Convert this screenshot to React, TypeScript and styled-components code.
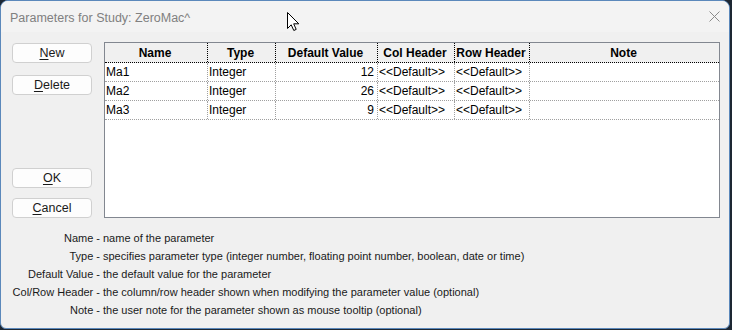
import React from 'react';
import styled, { createGlobalStyle } from 'styled-components';

const GlobalStyle = createGlobalStyle`
  html, body {
    margin: 0;
    padding: 0;
    background: #1d2733;
  }
  * {
    box-sizing: border-box;
  }
`;

const Window = styled.div`
  width: 730px;
  height: 329px;
  background: #f0f0f0;
  border: 1px solid #5b88bb;
  border-radius: 8px 8px 6px 6px;
  overflow: hidden;
  display: flex;
  flex-direction: column;
  font-family: 'Liberation Sans', Arial, sans-serif;
  font-size: 12px;
  color: #1a1a1a;
  position: relative;
`;

const TitleBar = styled.div`
  height: 31px;
  display: flex;
  align-items: center;
  justify-content: space-between;
  padding: 0 9px 0 9px;
  background: #f3f3f3;
`;

const Title = styled.div`
  color: #808080;
  font-size: 12.5px;
  padding-top: 2px;
`;

const CloseButton = styled.div`
  width: 30px;
  height: 20px;
  display: flex;
  align-items: center;
  justify-content: flex-end;
`;

const Body = styled.div`
  flex: 1;
  display: flex;
  flex-direction: column;
  padding: 10px 9px 0 11px;
`;

const Main = styled.div`
  display: flex;
  gap: 12px;
`;

const ButtonColumn = styled.div`
  width: 80px;
  display: flex;
  flex-direction: column;
  padding-top: 1px;
`;

const ButtonGroup = styled.div<{ $gap: number }>`
  display: flex;
  flex-direction: column;
  gap: ${p => p.$gap}px;
`;

const Spacer = styled.div`
  flex: 1;
`;

const Button = styled.button`
  width: 80px;
  height: 20px;
  padding: 0;
  border: 1px solid #d0d0d0;
  border-radius: 4px;
  background: #fdfdfd;
  font-family: 'Liberation Sans', Arial, sans-serif;
  font-size: 12.5px;
  color: #1a1a1a;

  u {
    text-decoration: underline;
    text-underline-offset: 2px;
  }
`;

const Grid = styled.div`
  width: 616px;
  height: 176px;
  background: #ffffff;
  border: 1px solid #828790;
  font-family: 'Liberation Sans', Arial, sans-serif;
  font-size: 12px;
  color: #000;
`;

const Row = styled.div<{ $header?: boolean }>`
  display: grid;
  grid-template-columns: 103px 68px 102px 77px 75px 1fr;
  height: ${p => (p.$header ? 20 : 19)}px;
  background: ${p => (p.$header ? '#f0f0f0' : '#ffffff')};
  border-bottom: 1px dotted ${p => (p.$header ? '#000' : '#a0a0a0')};
  font-weight: ${p => (p.$header ? 'bold' : 'normal')};
`;

const Cell = styled.div<{ $align?: 'left' | 'center' | 'right'; $header?: boolean; $last?: boolean }>`
  display: flex;
  align-items: center;
  justify-content: ${p =>
    p.$align === 'center' ? 'center' : p.$align === 'right' ? 'flex-end' : 'flex-start'};
  padding: 0 3px 0 1px;
  border-right: ${p => (p.$last ? 'none' : `1px dotted ${p.$header ? '#000' : '#a0a0a0'}`)};
  white-space: nowrap;
  overflow: hidden;
`;

const Help = styled.div`
  display: grid;
  grid-template-columns: 99px 1fr;
  column-gap: 3px;
  margin: 11px 0 0 -11px;
  line-height: 18px;
  font-size: 11px;
  color: #1a1a1a;
`;

const HelpLabel = styled.div`
  text-align: right;
  white-space: nowrap;
`;

const HelpText = styled.div`
  white-space: nowrap;
`;

const Cursor = styled.svg`
  position: absolute;
  left: 285px;
  top: 10px;
`;

const columns = ['Name', 'Type', 'Default Value', 'Col Header', 'Row Header', 'Note'];

const params = [
  { name: 'Ma1', type: 'Integer', value: 12 },
  { name: 'Ma2', type: 'Integer', value: 26 },
  { name: 'Ma3', type: 'Integer', value: 9 },
];

const help = [
  ['Name -', 'name of the parameter'],
  ['Type -', 'specifies parameter type (integer number, floating point number, boolean, date or time)'],
  ['Default Value -', 'the default value for the parameter'],
  ['Col/Row Header -', 'the column/row header shown when modifying the parameter value (optional)'],
  ['Note -', 'the user note for the parameter shown as mouse tooltip (optional)'],
];

const App: React.FC = () => {
  return (
    <>
      <GlobalStyle />
      <Window>
        <TitleBar>
          <Title>Parameters for Study: ZeroMac^</Title>
          <CloseButton>
            <svg width="11" height="11" viewBox="0 0 11 11">
              <path d="M0.5 0.5 L10.5 10.5 M10.5 0.5 L0.5 10.5" stroke="#8a8a8a" strokeWidth="1" fill="none" />
            </svg>
          </CloseButton>
        </TitleBar>
        <Body>
          <Main>
            <ButtonColumn>
              <ButtonGroup $gap={12}>
                <Button><u>N</u>ew</Button>
                <Button><u>D</u>elete</Button>
              </ButtonGroup>
              <Spacer />
              <ButtonGroup $gap={10}>
                <Button><u>O</u>K</Button>
                <Button><u>C</u>ancel</Button>
              </ButtonGroup>
            </ButtonColumn>
            <Grid>
              <Row $header>
                {columns.map((c, i) => (
                  <Cell key={c} $align="center" $header $last={i === columns.length - 1}>
                    {c}
                  </Cell>
                ))}
              </Row>
              {params.map(p => (
                <Row key={p.name}>
                  <Cell>{p.name}</Cell>
                  <Cell>{p.type}</Cell>
                  <Cell $align="right">{p.value}</Cell>
                  <Cell>{'<<Default>>'}</Cell>
                  <Cell>{'<<Default>>'}</Cell>
                  <Cell $last />
                </Row>
              ))}
            </Grid>
          </Main>
          <Help>
            {help.map(([label, text]) => (
              <React.Fragment key={label}>
                <HelpLabel>{label}</HelpLabel>
                <HelpText>{text}</HelpText>
              </React.Fragment>
            ))}
          </Help>
        </Body>
        <Cursor width="14" height="21" viewBox="0 0 14 21">
          <path
            d="M1.5 1.5 L1.5 17.5 L5.2 13.8 L7.8 19.5 L10.2 18.4 L7.7 12.8 L12.8 12.8 Z"
            fill="#ffffff"
            stroke="#000000"
            strokeWidth="1"
            strokeLinejoin="round"
          />
        </Cursor>
      </Window>
    </>
  );
};

export default App;
